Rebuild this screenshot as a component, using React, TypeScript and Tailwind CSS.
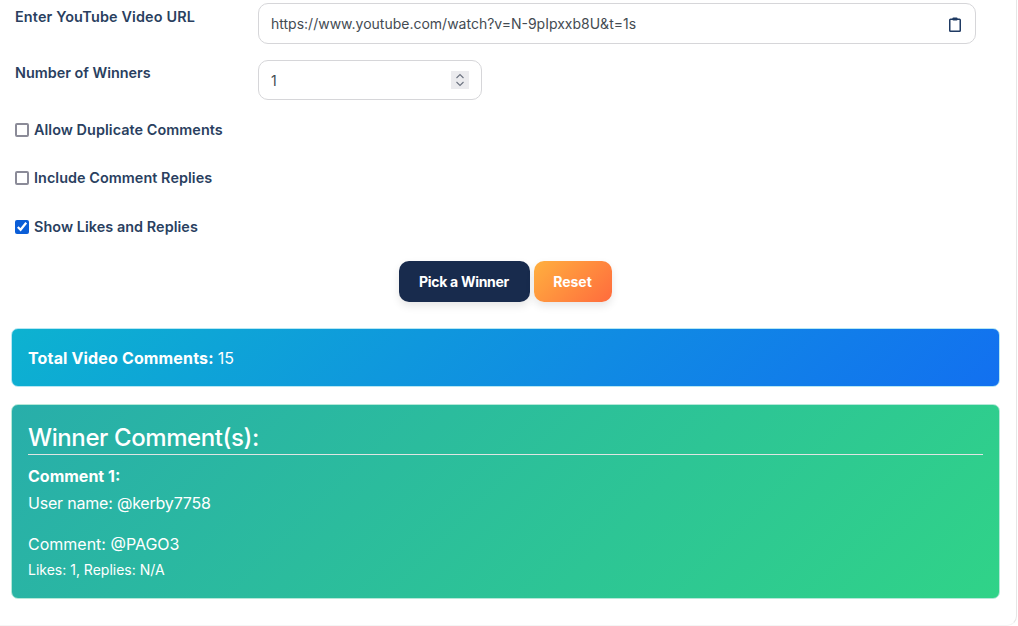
import React from "react";

const ClipboardIcon = () => (
  <svg className="w-[12px] h-[15px]" viewBox="0 0 12 15" fill="none">
    <rect x="0.75" y="2.25" width="10.5" height="12" rx="0.8" stroke="#1f3a63" strokeWidth="1.5" />
    <rect x="3.5" y="0.5" width="5" height="3" rx="0.8" fill="#1f3a63" />
  </svg>
);

const SpinnerIcon = () => (
  <svg className="w-[18px] h-[18px]" viewBox="0 0 18 18" fill="none" stroke="#6b7280" strokeWidth="1.1">
    <path d="M5.5 7 9 3.5 12.5 7" />
    <path d="M5.5 11 9 14.5 12.5 11" />
  </svg>
);

const CheckRow = ({ label, checked, className }: { label: string; checked?: boolean; className: string }) => (
  <label className={`flex items-center pl-[15px] ${className}`}>
    {checked ? (
      <input type="checkbox" defaultChecked className="w-[14px] h-[14px] mr-[5px] accent-[#0b5ed7]" />
    ) : (
      <input
        type="checkbox"
        className="appearance-none w-[14px] h-[14px] mr-[5px] bg-white border-2 border-[#8b8b98] rounded-[2px]"
      />
    )}
    <span className="text-[14.4px] leading-[21px] font-semibold tracking-[0.06px] text-[#2a3f5f]">{label}</span>
  </label>
);

export default function App() {
  return (
    <div className="w-[1018px] h-[626px] overflow-hidden bg-white font-['Inter',sans-serif]">
      <div className="w-[1017px] h-[626px] bg-white border-r border-b border-r-[#e6e6e6] border-b-[#f5f5f5] rounded-br-[10px] pt-[3px]">
        {/* URL row */}
        <div className="flex">
          <label className="w-[258px] pl-[15px] pt-[3px] text-[14.4px] leading-[21px] font-semibold tracking-[0.15px] text-[#2a3f5f]">
            Enter YouTube Video URL
          </label>
          <div className="relative w-[718px]">
            <input
              readOnly
              value="https://www.youtube.com/watch?v=N-9pIpxxb8U&t=1s"
              className="w-full h-[41px] px-[12px] text-[14px] text-[#444b52] border border-[#d6d6d9] rounded-[10px] outline-none"
            />
            <span className="absolute right-[15px] top-[14px] flex">
              <ClipboardIcon />
            </span>
          </div>
        </div>

        {/* Winners row */}
        <div className="flex mt-[16px]">
          <label className="w-[258px] pl-[15px] pt-[2px] text-[14.4px] leading-[21px] font-semibold text-[#2a3f5f]">
            Number of Winners
          </label>
          <div className="relative w-[224px]">
            <input
              readOnly
              value="1"
              className="w-full h-[40px] px-[12px] text-[14px] text-[#444b52] border border-[#d6d6d9] rounded-[10px] outline-none"
            />
            <span className="absolute right-[13px] top-[11px] bg-[#ebebee]">
              <SpinnerIcon />
            </span>
          </div>
        </div>

        <CheckRow label="Allow Duplicate Comments" className="mt-[19px]" />
        <CheckRow label="Include Comment Replies" className="mt-[27px]" />
        <CheckRow label="Show Likes and Replies" checked className="mt-[28px]" />

        {/* Buttons */}
        <div className="flex justify-center gap-[4px] mt-[24px] pr-[6px]">
          <button className="w-[131px] h-[41px] rounded-[10px] bg-[#182b4d] text-white text-[14px] font-bold tracking-[-0.3px] shadow-[0_4px_8px_rgba(0,0,0,0.1)]">
            Pick a Winner
          </button>
          <button className="w-[78px] h-[41px] rounded-[10px] bg-[linear-gradient(135deg,#ffb03f,#ff6b3d)] text-white text-[14px] font-bold shadow-[0_4px_8px_rgba(0,0,0,0.1)]">
            Reset
          </button>
        </div>

        {/* Total comments */}
        <div className="mt-[26px] ml-[11px] w-[989px] h-[59px] flex items-center px-[16px] rounded-[7px] border border-[#b6e7f3] bg-[linear-gradient(135deg,#0db2d0,#1270f0)] text-white text-[16px]">
          <strong className="font-bold tracking-[0.15px] mr-[4px]">Total Video Comments:</strong> 15
        </div>

        {/* Winner */}
        <div className="mt-[17px] ml-[11px] w-[989px] h-[195px] px-[16px] pt-[17px] rounded-[7px] border border-[#b5e8d8] bg-[linear-gradient(135deg,#28aeaa,#30d388)] text-white">
          <h2 className="text-[24px] leading-[32px] font-medium tracking-[-0.4px] border-b border-[#dfe5e3] h-[33px]">
            Winner Comment(s):
          </h2>
          <p className="mt-[9px] text-[16px] leading-[24px] font-bold">Comment 1:</p>
          <p className="mt-[3px] text-[16px] leading-[24px] tracking-[-0.2px]">User name: @kerby7758</p>
          <p className="mt-[17px] text-[16px] leading-[24px]">Comment: @PAGO3</p>
          <p className="mt-[2px] text-[14px] leading-[24px]">Likes: 1, Replies: N/A</p>
        </div>
      </div>
    </div>
  );
}
